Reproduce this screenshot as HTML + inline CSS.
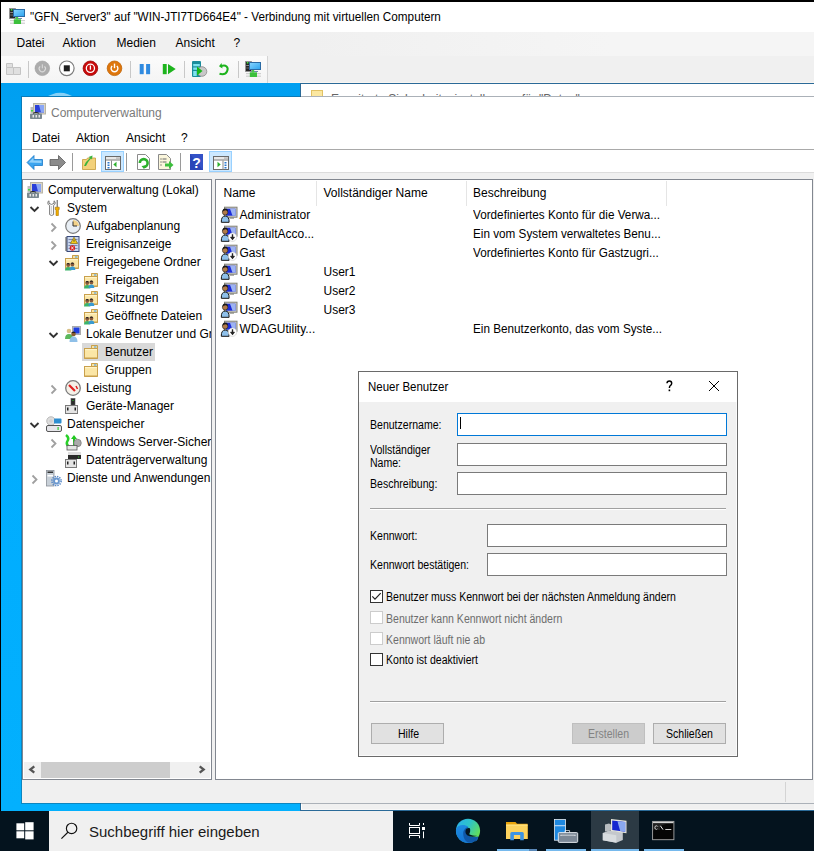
<!DOCTYPE html>
<html><head><meta charset="utf-8">
<style>
*{margin:0;padding:0;box-sizing:border-box}
html,body{width:814px;height:851px;overflow:hidden;background:#000}
body{position:relative;font-family:"Liberation Sans",sans-serif;font-size:12px;color:#000}
.a{position:absolute}
.t{position:absolute;white-space:nowrap;line-height:14px}
svg{position:absolute;overflow:visible}
</style></head><body>
<div class="a" style="left:1px;top:2px;width:813px;height:30px;background:#fff"></div>
<div class="t" style="left:29.6px;top:9.84px;font-size:12px;color:#000;transform:scaleX(0.977);transform-origin:0 0;">"GFN_Server3" auf "WIN-JTI7TD664E4" - Verbindung mit virtuellen Computern</div>
<div class="a" style="left:1px;top:32px;width:813px;height:24px;background:linear-gradient(90deg,#f0f0f0 0%,#f0f0f0 38%,#f5f5f5 75%)"></div>
<div class="t" style="left:16.5px;top:36.34px;font-size:12px;color:#000;">Datei</div>
<div class="t" style="left:62.5px;top:36.34px;font-size:12px;color:#000;">Aktion</div>
<div class="t" style="left:116.5px;top:36.34px;font-size:12px;color:#000;">Medien</div>
<div class="t" style="left:175.5px;top:36.34px;font-size:12px;color:#000;">Ansicht</div>
<div class="t" style="left:233.5px;top:36.34px;font-size:12px;color:#000;">?</div>
<div class="a" style="left:1px;top:56px;width:813px;height:27px;background:#f0f0f0;border-bottom:1px solid #f9f6f2"></div>
<div class="a" style="left:1px;top:56px;width:267px;height:27px;background:linear-gradient(#fbfbfb,#f4f4f4);border-right:1px solid #d4d4d4"></div>
<svg style="left:0;top:0" width="814" height="90">
<!-- disabled ctrl-alt-del -->
<g fill="#e0e0e0" stroke="#c4c4c4" stroke-width="1">
<path d="M6.5 63.5 h6 v4 h-6z"/><path d="M6.5 67.5 h7 v7 h-7z"/><path d="M13.5 67.5 h7 v7 h-7z"/>
</g>
<rect x="28" y="61" width="1" height="17" fill="#c8c8c8"/>
<circle cx="42.3" cy="68.3" r="7.3" fill="#acacac" stroke="#a0a0a0" stroke-width=".6"/>
<path d="M40.1 66.4 a3.1 3.1 0 1 0 4.4 0" fill="none" stroke="#dcdcdc" stroke-width="1.1"/><rect x="41.8" y="64.3" width="1" height="4" fill="#dcdcdc"/>
<circle cx="66.8" cy="68.3" r="7.3" fill="#fff" stroke="#7c7c7c" stroke-width="1.2"/>
<rect x="63.8" y="65.3" width="6" height="6" fill="#1e1e1e"/>
<circle cx="90.4" cy="68.3" r="7.3" fill="#c80a0a" stroke="#9a0404" stroke-width=".8"/>
<circle cx="90.4" cy="68.3" r="4.1" fill="none" stroke="#fff" stroke-width="1.3"/><rect x="89.75" y="65.5" width="1.3" height="4.2" fill="#fff"/>
<circle cx="114.5" cy="68.3" r="7.3" fill="#de760c" stroke="#c06408" stroke-width=".8"/>
<path d="M112.2 65.9 a3.4 3.4 0 1 0 4.6 0" fill="none" stroke="#fff" stroke-width="1.4"/><rect x="113.8" y="63.6" width="1.4" height="4.6" fill="#fff"/>
<rect x="130" y="61" width="1" height="17" fill="#c8c8c8"/>
<rect x="139.7" y="64" width="4" height="10.2" fill="#2f8ae0"/><rect x="146.1" y="64" width="4" height="10.2" fill="#2f8ae0"/>
<rect x="162.8" y="64" width="3.9" height="10.2" fill="#1db41d"/><path d="M168 64 L175.7 69.1 L168 74.2z" fill="#1db41d"/>
<rect x="184" y="61" width="1" height="17" fill="#c8c8c8"/>
<rect x="192" y="61" width="9" height="16" rx="1" fill="#1a8c9c"/>
<rect x="193.2" y="64" width="6.6" height="2.3" fill="#7fe3ef"/><rect x="193.2" y="67.5" width="6.6" height="2.3" fill="#7fe3ef"/><rect x="193.2" y="71" width="3.5" height="5" fill="#7fe3ef"/>
<circle cx="202" cy="71.5" r="4.8" fill="#c8c8c8" stroke="#8a8a8a" stroke-width=".8"/>
<path d="M197 66.5 L202.5 71 L197 75.5z" fill="#18b818"/>
<path d="M221.5 63 L219 66.3 L222.5 68.5z" fill="#1db41d"/>
<path d="M220.5 66.5 C226 64 229 67.5 227 71.5 C225.5 74.5 222 74.5 219.5 73.8" fill="none" stroke="#1db41d" stroke-width="2"/>
<rect x="238" y="61" width="1" height="17" fill="#c8c8c8"/>
<defs>
<linearGradient id="vmg" x1="0" y1="0" x2="1" y2="1"><stop offset="0" stop-color="#8ad6ff"/><stop offset="1" stop-color="#2aa2ee"/></linearGradient>
<symbol id="vmc" viewBox="0 0 16 16" overflow="visible">
<rect x="0.4" y="0.4" width="6" height="10.2" fill="#262626" stroke="#9a9a9a" stroke-width=".8"/>
<rect x="1.8" y="1" width="1.6" height="1.6" fill="#3ee03e"/>
<rect x="1.2" y="4" width="3" height="1" fill="#8a8a8a"/><rect x="1.2" y="6.5" width="3" height="1" fill="#6a6a6a"/>
<rect x="4.5" y="1.5" width="11" height="7" fill="url(#vmg)" stroke="#2a6aa4" stroke-width="1"/>
<rect x="1" y="12" width="15" height="1.2" fill="#cfcfcf"/><rect x="1" y="14.6" width="15" height="1.2" fill="#cfcfcf"/>
<rect x="6.5" y="10.1" width="6.5" height=".8" fill="#4a6a9a"/>
<rect x="6.8" y="9" width="2.4" height="2.5" fill="#4cc84c"/>
<rect x="4.8" y="11.3" width="7.2" height="4.7" fill="#3cc03c"/>
</symbol></defs>
<use href="#vmc" x="245" y="61" width="16" height="16"/>
</svg>
<svg style="left:9px;top:8px" width="16" height="16"><use href="#vmc" width="16" height="16"/></svg>
<div class="a" style="left:1px;top:83px;width:813px;height:728px;background:linear-gradient(#009ff0 0%,#00a6f8 20%,#00adff 50%,#03b0fd 100%)"></div>
<div class="a" style="left:300px;top:83px;width:514px;height:728px;background:#f0f0f0;border:1px solid #2a6a98;border-right:none"></div>
<div class="a" style="left:301px;top:84px;width:513px;height:12px;background:#fff"></div>
<div class="a" style="left:301px;top:84px;width:1px;height:726px;background:#fff"></div>
<div class="a" style="left:301px;top:809px;width:513px;height:1px;background:#f7f7f7"></div>
<div class="a" style="left:311px;top:90px;width:12px;height:6px;background:#fbe7a0;border:1px solid #e2c264;border-bottom:none"></div>
<svg style="left:0;top:0" width="814" height="100"><path d="M48 96 Q53 94 56 93 Q60 92.3 64 93 Q68 94 72 96z" fill="#a8dcf8" opacity=".8"/></svg>
<div class="a" style="left:331px;top:84px;width:300px;height:12px;overflow:hidden"><div class="t" style="left:0;top:7.8px;font-size:12px;color:#666">Erweiterte Sicherheitseinstellungen für "Daten"</div></div>
<div class="a" style="left:21px;top:96px;width:793px;height:708px;border:1px solid rgba(30,50,70,.33);border-right:none"></div>
<div class="a" style="left:22px;top:97px;width:792px;height:706px;background:#f0f0f0"></div>
<div class="a" style="left:22px;top:97px;width:792px;height:53px;background:#fff;border-bottom:1px solid #a9a9a9"></div>
<div class="t" style="left:51px;top:105.84px;font-size:12px;color:#7a7a7a;">Computerverwaltung</div>
<div class="t" style="left:32px;top:130.84px;font-size:12px;color:#000;">Datei</div>
<div class="t" style="left:76px;top:130.84px;font-size:12px;color:#000;">Aktion</div>
<div class="t" style="left:126px;top:130.84px;font-size:12px;color:#000;">Ansicht</div>
<div class="t" style="left:181px;top:130.84px;font-size:12px;color:#000;">?</div>
<div class="a" style="left:22px;top:150px;width:792px;height:22px;background:#fff"></div>
<div class="a" style="left:22px;top:172px;width:792px;height:1px;background:#dcdcdc"></div>
<div class="a" style="left:101px;top:151px;width:23px;height:21px;background:#cce8ff;border:1px solid #99d1ff"></div>
<div class="a" style="left:209px;top:151px;width:23px;height:21px;background:#cce8ff;border:1px solid #99d1ff"></div>
<div class="a" style="left:22px;top:179px;width:190px;height:601px;background:#fff;border:1px solid #828790"></div>
<div class="a" style="left:215px;top:179px;width:598px;height:601px;background:#fff;border:1px solid #828790"></div>
<div class="a" style="left:785px;top:782px;width:1px;height:20px;background:#d4d4d4"></div>
<svg width="0" height="0" style="position:absolute"><defs>
<symbol id="cm" viewBox="0 0 16 16" overflow="visible">
 <rect x="3.5" y="0.5" width="12" height="10.5" fill="#d9d5c6" stroke="#b8b4a6" stroke-width="1"/>
 <rect x="5" y="2" width="9" height="7.5" fill="#2a3fd8"/>
 <path d="M9 2 h5 v7.5 h-3z" fill="#8aa6f5"/>
 <rect x="0.5" y="4" width="2.5" height="6" fill="#bdbdbd"/>
 <rect x="1" y="7" width="2" height="1.5" fill="#3fdc3f"/>
 <path d="M3 10.5 q3 -2 6 0" fill="none" stroke="#222" stroke-width="1.2"/>
 <rect x="0" y="10.5" width="12" height="5.5" rx=".8" fill="#7b8990"/>
 <rect x="2.5" y="12" width="1.5" height="2.5" fill="#e6e6e6"/><rect x="5.5" y="12" width="1.5" height="2.5" fill="#e6e6e6"/><rect x="8.5" y="12" width="1.5" height="2.5" fill="#e6e6e6"/>
</symbol>
<symbol id="user" viewBox="0 0 16 16" overflow="visible">
 <rect x="3.5" y="0.5" width="12.5" height="10" fill="#d0d0c8" stroke="#808078" stroke-width="1"/>
 <rect x="5" y="2" width="9.5" height="7" fill="#1c2cd8"/>
 <path d="M9 2 h5.5 v7 h-3z" fill="#9db3f2"/>
 <rect x="8.5" y="10.5" width="4.5" height="1.5" fill="#909088"/>
 <path d="M0.3 15.6 q-.2 -6.3 3.9 -6.3 q4.1 0 3.9 6.3z" fill="#8ec0ea" stroke="#151515" stroke-width="1"/>
 <circle cx="4.1" cy="5.6" r="2.7" fill="#b07a48" stroke="#222" stroke-width=".6"/>
 <path d="M1.3 5.2 q.3 -3.6 3 -3.4 q2.6 .1 2.7 3 q-1.2 -1.4 -2.8 -1.2 q-1.8 .2 -2.9 1.6z" fill="#1a1a1a"/>
</symbol>
<symbol id="userd" viewBox="0 0 16 16" overflow="visible">
 <use href="#user" width="16" height="16"/>
 <circle cx="11.5" cy="11.5" r="4.2" fill="#fff" stroke="#c8c8c8" stroke-width=".6"/>
 <path d="M11.5 8.6 v4.5 M9.6 11.2 l1.9 2.2 l1.9 -2.2" fill="none" stroke="#222" stroke-width="1.4"/>
</symbol>
<symbol id="fold" viewBox="0 0 16 16" overflow="visible">
 <path d="M0.5 3.5 h6 l1 -1 h0 v-2 h5.5 q.5 0 .5 .5 v12.5 h-13z" fill="#f3d27e" stroke="#c9a04c" stroke-width="1"/>
 <rect x="7.5" y="0.5" width="6" height="3" rx=".5" fill="#fbe3a0" stroke="#c9a04c" stroke-width="1"/>
 <rect x="10" y="1.5" width="2.5" height="1" fill="#3a9af0"/>
 <rect x="0.5" y="3.5" width="13" height="9.5" fill="#fbe6a6" stroke="#c9a04c" stroke-width="1"/>
 <rect x="1" y="4" width="12" height="1.2" fill="#fff3c8"/>
</symbol>
<symbol id="sfold" viewBox="0 0 16 16" overflow="visible">
 <use href="#fold" width="16" height="16"/>
 <circle cx="3.2" cy="10" r="1.9" fill="#8a5a3a"/><path d="M1.3 9.2 q1.9 -2.4 3.8 0z" fill="#222"/>
 <path d="M0 15.5 q0 -3.6 3.2 -3.6 q3.2 0 3.2 3.6z" fill="#3cb46a"/>
 <circle cx="7.4" cy="9.5" r="1.9" fill="#8a5a3a"/><path d="M5.5 8.7 q1.9 -2.4 3.8 0z" fill="#222"/>
 <path d="M4.5 15 q0 -3.4 2.9 -3.4 q2.9 0 2.9 3.4z" fill="#3a9ad0"/>
</symbol>
<symbol id="chevd" viewBox="0 0 10 6" overflow="visible"><path d="M1 1 L5 5 L9 1" fill="none" stroke="#333" stroke-width="1.9"/></symbol>
<symbol id="chevr" viewBox="0 0 6 10" overflow="visible"><path d="M1 1 L5 5 L1 9" fill="none" stroke="#a0a0a0" stroke-width="1.8"/></symbol>
</defs></svg>
<svg style="left:30px;top:103px" width="16" height="16"><use href="#cm" width="16" height="16"/></svg>
<svg style="left:0;top:0" width="814" height="180">
<path d="M27 162.5 L34 155.5 V159.5 H42.5 V165.5 H34 V169.5z" fill="#3aa4ef" stroke="#1a78c8" stroke-width=".8"/>
<path d="M28.5 162.5 L33.5 157.5 V160.5 H41.5 V163z" fill="#8fd0fa"/>
<path d="M65.5 162.5 L58.5 155.5 V159.5 H50 V165.5 H58.5 V169.5z" fill="#8c8c8c" stroke="#5c5c5c" stroke-width=".8"/>
<rect x="72" y="153" width="1" height="18" fill="#9a9a9a"/>
<path d="M82.5 159.5 h4 l1 -1.5 h8 v11.5 h-13z" fill="#f3d17a" stroke="#c59a3a" stroke-width=".8"/>
<path d="M84 166 q2 -5 6 -8 l-1.5 -1 l4 -1.5 l-0.5 4 l-1 -1 q-3 3 -5 7.5z" fill="#3cb43c"/>
<rect x="105.5" y="156.5" width="15" height="13" fill="#fff" stroke="#6a6a6a" stroke-width="1"/>
<rect x="106" y="157" width="14" height="2.5" fill="#e8e8e8"/><rect x="106" y="159.5" width="14" height="1" fill="#7a7a7a"/>
<rect x="116.5" y="157.6" width="1" height="1" fill="#666"/><rect x="118.5" y="157.6" width="1" height="1" fill="#666"/>
<rect x="107.5" y="162" width="2" height="1.5" fill="#2a78d0"/><rect x="107.5" y="164.5" width="2" height="1.5" fill="#2a78d0"/><rect x="107.5" y="167" width="2" height="1.5" fill="#2a78d0"/>
<path d="M116.5 161.8 v5.5 l-3.2 -2.75z" fill="#2cb02c"/>
<rect x="111" y="160.5" width="1" height="9" fill="#8a8a8a"/>
<rect x="126" y="153" width="1" height="18" fill="#9a9a9a"/>
<path d="M137.5 154.5 h8 l4 4 v11 h-12z" fill="#fff" stroke="#8a8a8a" stroke-width="1"/>
<path d="M139.8 163 a3.9 3.9 0 1 1 3.9 3.9" fill="none" stroke="#2cb02c" stroke-width="2.6"/>
<path d="M141.5 166 l4.5 -0.5 l-2 3.5z" fill="#2cb02c"/>
<path d="M158.5 154.5 h8 l4 4 v11 h-12z" fill="#fbf6dc" stroke="#8a8a8a" stroke-width="1"/>
<rect x="160.5" y="158.5" width="1" height="1" fill="#333"/><rect x="162.5" y="158.5" width="4" height="1" fill="#666"/>
<rect x="160.5" y="161.5" width="1" height="1" fill="#333"/><rect x="162.5" y="161.5" width="4" height="1" fill="#666"/>
<rect x="160.5" y="164.5" width="1" height="1" fill="#333"/>
<path d="M165 163.5 h4 v-2.5 l4.5 4 l-4.5 4 v-2.5 h-4z" fill="#3cbf3c"/>
<rect x="180" y="153" width="1" height="18" fill="#9a9a9a"/>
<rect x="190" y="154" width="13" height="16" fill="#2a46b8"/>
<path d="M190 154 h13 v16 z" fill="#3a5ad0" opacity=".6"/>
<text x="196.5" y="167.5" font-family="Liberation Sans" font-size="14" font-weight="bold" fill="#fff" text-anchor="middle">?</text>
<rect x="213.5" y="156.5" width="15" height="13" fill="#fff" stroke="#6a6a6a" stroke-width="1"/>
<rect x="214" y="157" width="14" height="2.5" fill="#e8e8e8"/><rect x="214" y="159.5" width="14" height="1" fill="#7a7a7a"/>
<rect x="224.5" y="157.6" width="1" height="1" fill="#666"/><rect x="226.5" y="157.6" width="1" height="1" fill="#666"/>
<path d="M217.5 161.8 v5.5 l3.2 -2.75z" fill="#2cb02c"/>
<rect x="222.5" y="160.5" width="1" height="9" fill="#8a8a8a"/>
<rect x="224.5" y="162" width="2" height="1.5" fill="#2a78d0"/><rect x="224.5" y="164.5" width="2" height="1.5" fill="#2a78d0"/><rect x="224.5" y="167" width="2" height="1.5" fill="#2a78d0"/>
</svg>
<div class="a" style="left:0;top:0;width:211px;height:779px;overflow:hidden">
<div class="a" style="left:82px;top:343px;width:73px;height:18px;background:#d9d9d9"></div>
<div class="t" style="left:48px;top:182.84px;font-size:12px;color:#000;">Computerverwaltung (Lokal)</div>
<div class="t" style="left:67px;top:200.84px;font-size:12px;color:#000;">System</div>
<div class="t" style="left:86px;top:218.84px;font-size:12px;color:#000;">Aufgabenplanung</div>
<div class="t" style="left:86px;top:236.84px;font-size:12px;color:#000;">Ereignisanzeige</div>
<div class="t" style="left:86px;top:254.84px;font-size:12px;color:#000;">Freigegebene Ordner</div>
<div class="t" style="left:105px;top:272.84px;font-size:12px;color:#000;">Freigaben</div>
<div class="t" style="left:105px;top:290.84px;font-size:12px;color:#000;">Sitzungen</div>
<div class="t" style="left:105px;top:308.84px;font-size:12px;color:#000;">Geöffnete Dateien</div>
<div class="t" style="left:86px;top:326.84px;font-size:12px;color:#000;">Lokale Benutzer und Gruppen</div>
<div class="t" style="left:105px;top:344.84px;font-size:12px;color:#000;">Benutzer</div>
<div class="t" style="left:105px;top:362.84px;font-size:12px;color:#000;">Gruppen</div>
<div class="t" style="left:86px;top:380.84px;font-size:12px;color:#000;">Leistung</div>
<div class="t" style="left:86px;top:398.84px;font-size:12px;color:#000;">Geräte-Manager</div>
<div class="t" style="left:67px;top:416.84px;font-size:12px;color:#000;">Datenspeicher</div>
<div class="t" style="left:86px;top:434.84px;font-size:12px;color:#000;">Windows Server-Sicherung</div>
<div class="t" style="left:86px;top:452.84px;font-size:12px;color:#000;">Datenträgerverwaltung</div>
<div class="t" style="left:67px;top:470.84px;font-size:12px;color:#000;">Dienste und Anwendungen</div>
<svg style="left:0;top:0" width="814" height="500"><g transform="translate(27,182)"><use href="#cm" width="16" height="16"/></g>
<use href="#chevd" x="29.5" y="206" width="10" height="6"/>
<g transform="translate(46,200)"><path d="M3 0.8 C1.2 1.6 1.4 4.6 3.6 5.4 V14.6 Q5.6 16.4 7.6 14.6 V5.4 C9.6 4.6 9.8 1.6 8 0.8 V3.4 L5.5 4.4 L3 3.4z" fill="#fafafa" stroke="#6e6e6e" stroke-width=".9"/><rect x="5.2" y="6" width=".8" height="8" fill="#c8c8c8"/><rect x="10.6" y="0" width="1.3" height="7.5" fill="#7a7a7a"/><path d="M9.2 7.2 h4 v2.3 h-0.8 v6 h-2.4 v-6 h-0.8z" fill="#f2b000" stroke="#a87000" stroke-width=".6"/></g>
<use href="#chevr" x="50.5" y="222.5" width="6" height="10"/>
<g transform="translate(65,218)"><circle cx="8" cy="8" r="7.3" fill="#e8eef4" stroke="#7a7a7a" stroke-width="1.2"/><path d="M8 8 V2 A6 6 0 0 1 14 8z" fill="#f2d28a"/><path d="M8 3.5 V8 H12" fill="none" stroke="#333" stroke-width="1"/></g>
<use href="#chevr" x="50.5" y="240.5" width="6" height="10"/>
<g transform="translate(65,236)"><rect x="2" y="0.5" width="12" height="15" fill="#c8d6ee" stroke="#3a4a7a" stroke-width="1"/><rect x="3.5" y="3" width="9" height="1" fill="#7a8ab0"/><rect x="3.5" y="6" width="9" height="1" fill="#7a8ab0"/><rect x="3.5" y="9" width="9" height="1" fill="#7a8ab0"/><rect x="3.5" y="12" width="9" height="1" fill="#7a8ab0"/><path d="M1 1.5 v13" stroke="#333" stroke-width="1.8" stroke-dasharray="1 1"/><path d="M9 1.2 l3.6 6.3 h-7.2z" fill="#f3cc1a" stroke="#7a5a00" stroke-width=".6"/><rect x="8.6" y="3.5" width=".8" height="2.2" fill="#333"/><circle cx="7.4" cy="12" r="2.7" fill="#d82020"/><path d="M6.2 10.8 l2.4 2.4 M8.6 10.8 l-2.4 2.4" stroke="#fff" stroke-width=".9"/></g>
<use href="#chevd" x="48.5" y="260" width="10" height="6"/>
<g transform="translate(65,254)"><use href="#sfold" x="0" y="1" width="16" height="16"/></g>
<g transform="translate(84,272)"><use href="#sfold" x="0" y="1" width="16" height="16"/></g>
<g transform="translate(84,290)"><use href="#sfold" x="0" y="1" width="16" height="16"/></g>
<g transform="translate(84,308)"><use href="#sfold" x="0" y="1" width="16" height="16"/></g>
<use href="#chevd" x="48.5" y="332" width="10" height="6"/>
<g transform="translate(65,326)"><rect x="7.5" y="0.5" width="8" height="8" fill="#d8d8d0" stroke="#aaa" stroke-width="1"/><rect x="8.5" y="1.5" width="6" height="6" fill="#1f3fe0"/><circle cx="4" cy="5" r="2.3" fill="#d8c088"/><path d="M0 13 q0 -5 4 -5 q4 0 4 5z" fill="#5cb85c"/><circle cx="8.5" cy="8" r="2.3" fill="#8a5a30"/><path d="M6.2 7 q2.3 -3 4.6 0z" fill="#222"/><path d="M4.5 16 q0 -5.5 4 -5.5 q4 0 4 5.5z" fill="#8fc0e8"/></g>
<g transform="translate(84,344)"><use href="#fold" x="0" y="1" width="16" height="16"/></g>
<g transform="translate(84,362)"><use href="#fold" x="0" y="1" width="16" height="16"/></g>
<use href="#chevr" x="50.5" y="384.5" width="6" height="10"/>
<g transform="translate(65,380)"><circle cx="8" cy="8" r="7.3" fill="#f4f0e8" stroke="#7a7a7a" stroke-width="1.3"/><path d="M4 5 l6 6" stroke="#e02020" stroke-width="2.2"/><path d="M11 6 l1.5 3" stroke="#e02020" stroke-width="1.5"/></g>
<g transform="translate(65,398)"><rect x="6" y="0.5" width="4" height="6.5" fill="#2a2a2a" stroke="#555" stroke-width=".6"/><rect x="7.5" y="2" width="1" height="1" fill="#3c3"/><rect x="0.5" y="7.5" width="12" height="8" fill="#e4e4e4" stroke="#7a7a7a" stroke-width="1"/><rect x="2" y="9.5" width="1.5" height="3" fill="#222"/><rect x="9.5" y="9.5" width="1.5" height="3" fill="#222"/></g>
<use href="#chevd" x="29.5" y="422" width="10" height="6"/>
<g transform="translate(46,416)"><circle cx="5" cy="5" r="4.3" fill="#ddd" stroke="#999" stroke-width=".6"/><circle cx="5" cy="5" r="1" fill="#fff" stroke="#888" stroke-width=".4"/><rect x="8" y="2.5" width="7.5" height="5" rx="1" fill="#2d8ed0"/><rect x="0.5" y="9.5" width="15" height="6" rx="1.5" fill="#e6e6ea" stroke="#555" stroke-width="1"/><rect x="11.5" y="11" width="1.2" height="3" fill="#3c3"/></g>
<use href="#chevr" x="50.5" y="438.5" width="6" height="10"/>
<g transform="translate(65,434)"><path d="M1 1 q4 3 1 7 q-1 2 2 5" fill="none" stroke="#28d028" stroke-width="2.5"/><path d="M9 1 l-3 4 h2 v8 h2 v-8 h2z" fill="#20c820"/><circle cx="12.5" cy="9" r="3.8" fill="#aaa" stroke="#666" stroke-width=".6"/><rect x="2" y="11.5" width="10" height="4.5" fill="#e4e4e4" stroke="#555" stroke-width=".8"/></g>
<g transform="translate(65,452)"><rect x="3" y="0" width="13" height="3" fill="#e0e0e0"/><rect x="3" y="3" width="13" height="4" fill="#2a2a2a"/><rect x="13" y="4.5" width="1.2" height="1" fill="#3c3"/><rect x="0.5" y="7.5" width="11" height="8" fill="#e4e4e4" stroke="#7a7a7a" stroke-width="1"/><rect x="2" y="9.5" width="1.5" height="3" fill="#222"/><rect x="8.5" y="9.5" width="1.5" height="3" fill="#222"/></g>
<use href="#chevr" x="31.5" y="474.5" width="6" height="10"/>
<g transform="translate(46,470)"><rect x="0.5" y="0.5" width="7.5" height="15.5" fill="#c8d0d8" stroke="#8a9098" stroke-width=".8"/><rect x="1.5" y="1.5" width="5.5" height="1.5" fill="#333"/><rect x="1.5" y="5" width="5.5" height="1.5" fill="#fff"/><circle cx="10.5" cy="11" r="4.6" fill="none" stroke="#5a8ac8" stroke-width="1.6" stroke-dasharray="1.4 1"/><circle cx="10.5" cy="11" r="3.4" fill="#6a98d0"/><circle cx="10.5" cy="11" r="1.5" fill="#fff"/></g></svg>
</div>
<div class="a" style="left:24px;top:762px;width:186px;height:16px;background:#f0f0f0"></div>
<div class="a" style="left:41px;top:762px;width:129px;height:16px;background:#cdcdcd"></div>
<svg style="left:0;top:0" width="814" height="851"><path d="M34.3 766.3 L30.3 769.5 L34.3 772.7" fill="none" stroke="#555" stroke-width="2.3"/><path d="M199.7 766.3 L203.7 769.5 L199.7 772.7" fill="none" stroke="#555" stroke-width="2.3"/></svg>
<div class="t" style="left:223.5px;top:185.84px;font-size:12px;color:#000;">Name</div>
<div class="t" style="left:323.5px;top:185.84px;font-size:12px;color:#000;">Vollständiger Name</div>
<div class="t" style="left:473px;top:185.84px;font-size:12px;color:#000;">Beschreibung</div>
<div class="a" style="left:316px;top:181px;width:1px;height:25px;background:#e5e5e5"></div>
<div class="a" style="left:466px;top:181px;width:1px;height:25px;background:#e5e5e5"></div>
<div class="a" style="left:666px;top:181px;width:1px;height:25px;background:#e5e5e5"></div>
<div class="t" style="left:239.5px;top:208.14px;font-size:12px;color:#000;">Administrator</div>
<div class="t" style="left:473px;top:208.14px;font-size:12px;color:#000;transform:scaleX(0.977);transform-origin:0 0;">Vordefiniertes Konto für die Verwa...</div>
<div class="t" style="left:239.5px;top:227.14px;font-size:12px;color:#000;">DefaultAcco...</div>
<div class="t" style="left:473px;top:227.14px;font-size:12px;color:#000;transform:scaleX(0.977);transform-origin:0 0;">Ein vom System verwaltetes Benu...</div>
<div class="t" style="left:239.5px;top:246.14px;font-size:12px;color:#000;">Gast</div>
<div class="t" style="left:473px;top:246.14px;font-size:12px;color:#000;transform:scaleX(0.977);transform-origin:0 0;">Vordefiniertes Konto für Gastzugri...</div>
<div class="t" style="left:239.5px;top:265.14px;font-size:12px;color:#000;">User1</div>
<div class="t" style="left:323.5px;top:265.14px;font-size:12px;color:#000;">User1</div>
<div class="t" style="left:239.5px;top:284.14px;font-size:12px;color:#000;">User2</div>
<div class="t" style="left:323.5px;top:284.14px;font-size:12px;color:#000;">User2</div>
<div class="t" style="left:239.5px;top:303.14px;font-size:12px;color:#000;">User3</div>
<div class="t" style="left:323.5px;top:303.14px;font-size:12px;color:#000;">User3</div>
<div class="t" style="left:239.5px;top:322.14px;font-size:12px;color:#000;">WDAGUtility...</div>
<div class="t" style="left:473px;top:322.14px;font-size:12px;color:#000;transform:scaleX(0.977);transform-origin:0 0;">Ein Benutzerkonto, das vom Syste...</div>
<svg style="left:0;top:0" width="814" height="400"><use href="#user" x="221" y="206.70000000000002" width="16" height="16"/><use href="#userd" x="221" y="225.70000000000002" width="16" height="16"/><use href="#userd" x="221" y="244.70000000000002" width="16" height="16"/><use href="#user" x="221" y="263.7" width="16" height="16"/><use href="#user" x="221" y="282.7" width="16" height="16"/><use href="#user" x="221" y="301.7" width="16" height="16"/><use href="#userd" x="221" y="320.7" width="16" height="16"/></svg>
<div class="a" style="left:0;top:811px;width:814px;height:40px;background:#04131e"></div>
<div class="a" style="left:49px;top:811px;width:344px;height:40px;background:#f0f0f0"></div>
<div class="t" style="left:89px;top:824.80px;font-size:15px;color:#1a1a1a;">Suchbegriff hier eingeben</div>
<div class="a" style="left:591px;top:811px;width:48px;height:40px;background:#2c3a44"></div>
<svg style="left:0;top:0" width="814" height="851">
<!-- start logo -->
<g fill="#fff">
<rect x="16.4" y="823.3" width="7.8" height="7"/><rect x="25.2" y="822.2" width="8.4" height="8.1"/>
<rect x="16.4" y="831.3" width="7.8" height="7"/><rect x="25.2" y="831.3" width="8.4" height="8.1"/>
</g>
<!-- magnifier -->
<circle cx="71.6" cy="828.4" r="5.2" fill="none" stroke="#111" stroke-width="1.15"/>
<path d="M67.9 832.2 L61.4 838.6" stroke="#111" stroke-width="1.2"/>
<!-- task view -->
<g fill="none" stroke="#fff" stroke-width="1">
<path d="M409.5 823 V825.5 H419.5 V823"/>
<rect x="409.5" y="827.5" width="10" height="6"/>
<path d="M409.5 838.2 V835.5 H419.5 V838.2"/>
<path d="M423.5 823 V825 M423.5 831.5 V838.2"/>
</g>
<rect x="422" y="827" width="3" height="3" fill="#fff"/>
<!-- edge -->
<defs>
<linearGradient id="eg1" x1="0" y1="0" x2="1" y2=".6"><stop offset="0" stop-color="#2aaef0"/><stop offset=".5" stop-color="#2ec4c8"/><stop offset="1" stop-color="#66e052"/></linearGradient>
<linearGradient id="eg2" x1="0" y1="0" x2="0" y2="1"><stop offset="0" stop-color="#1e8ce0"/><stop offset="1" stop-color="#1474d4"/></linearGradient>
</defs>
<g transform="translate(452,815)">
<circle cx="16" cy="15.8" r="12.1" fill="url(#eg1)"/>
<path d="M4 14.5 C5.5 9.5 12.5 8.8 16.5 12 C14.5 13 12.5 15.5 12.5 18.5 C12.5 23.5 17 26.5 22 26.5 C24 26.5 25.8 25.8 26.2 21.8 C23 27.5 20 28 16 28 C9.3 28 4 22.6 4 15.8z" fill="url(#eg2)"/>
<path d="M11.2 18.5 C11.2 14.5 14.5 12.2 16.5 12 C15 14 14.5 16 15 18.5 C16 21.5 20 22.5 26.2 21.6 C25 25.5 21.5 27.6 18 27.7 C13.8 27.7 11.2 23.5 11.2 18.5z" fill="#0f58a8"/>
<path d="M13.5 15.8 C14 13.5 16 12.6 17.8 13.2 C18.6 14.8 18.2 17.5 17.2 19.2 C19.5 20.4 22 20.8 25 20.8 C21 22.3 16.5 21.8 14.5 19.6 C13.7 18.6 13.3 17.2 13.5 15.8z" fill="#041520"/>
</g>
<!-- explorer -->
<path d="M506 822 h9.5 l1.5 1.8 h10.6 v15.2 h-21.6z" fill="#e9a30a"/>
<rect x="506" y="824.6" width="21.6" height="14.4" fill="#fdd35e"/>
<rect x="506" y="824.6" width="21.6" height="1" fill="#ffe48a"/>
<path d="M510.3 840.2 v-6.8 q0 -1.5 1.5 -1.5 h10.5 q1.5 0 1.5 1.5 v6.8 h-3.6 v-5.2 h-6.3 v5.2z" fill="#3c94e4"/>
<rect x="497" y="849" width="32" height="2" fill="#76b9ed"/><rect x="529" y="849" width="8" height="2" fill="#5a88b8"/>
<!-- server manager -->
<rect x="554.6" y="819.6" width="10.8" height="20.6" fill="#1e88e0" stroke="#e8f0f8" stroke-width=".8"/>
<rect x="554.6" y="825.3" width="10.8" height=".9" fill="#e8f0f8"/>
<path d="M565 832.6 v-2 h4.6 v2" fill="none" stroke="#e8f0f8" stroke-width=".8"/>
<rect x="558.3" y="832.6" width="19.4" height="9.8" rx="1" fill="#7c8896" stroke="#eef2f6" stroke-width=".9"/>
<path d="M560.5 835.2 h15 M561 835 v1 M575 835 v1" stroke="#e0e6ec" stroke-width=".8"/>
<rect x="546" y="849" width="40" height="2" fill="#76b9ed"/>
<!-- hyper-v connect -->
<path d="M605 824.5 l4 -1 l2 1 v6 l-6 1z" fill="#b8bcc0"/>
<path d="M602.8 833 l6 -2.5 l14 1.5 v8 l-6.5 2.8 l-13.5 -2.5z" fill="#c4c8cc"/>
<path d="M602.8 833 l13.5 2.2 v7.6 l-13.5 -2.5z" fill="#d8dcdf"/>
<path d="M611 819 l15.5 1.8 v12.4 l-15.5 -2.2z" fill="#e6e6dc"/>
<path d="M612.2 820.6 l13 1.4 v9.8 l-13 -1.8z" fill="#1426d0"/>
<path d="M617.5 821.2 l7.7 .8 v9.8 l-5 -.7 q-1.5 -5 -2.7 -9.9z" fill="#8aa8f0"/>
<rect x="591" y="849" width="48" height="2" fill="#76b9ed"/>
<!-- cmd -->
<rect x="652.6" y="821.4" width="21.3" height="18.3" fill="#050505" stroke="#a8a8a8" stroke-width=".9"/>
<rect x="653" y="821.8" width="20.5" height="1.4" fill="#d4d4d4"/>
<path d="M653 823.2 h16 q-6 1 -10 3.5 q-4 2 -6 4z" fill="#3a3a3a" opacity=".55"/>
<path d="M657.6 826.4 q-.6 -.6 -1.3 -.6 q-1.4 0 -1.4 1.8 q0 1.8 1.4 1.8 q.7 0 1.3 -.6" fill="none" stroke="#e0e0e0" stroke-width=".9"/>
<rect x="658.6" y="826.6" width=".8" height=".8" fill="#c0c0c0"/><rect x="658.6" y="828.6" width=".8" height=".8" fill="#c0c0c0"/>
<path d="M660.4 825.8 l2.6 3.8" stroke="#f0f0f0" stroke-width="1"/>
<rect x="665.3" y="829.1" width="6" height=".9" fill="#e8e8e8"/>
<rect x="644" y="849" width="40" height="2" fill="#76b9ed"/>
</svg>

<div class="a" style="left:358px;top:371px;width:380px;height:386px;background:#f0f0f0;border:1px solid #6a6a6a"></div>
<div class="a" style="left:359px;top:372px;width:378px;height:30px;background:#fff"></div>
<div class="a" style="left:736px;top:402px;width:1px;height:354px;background:#fafafa"></div>
<div class="a" style="left:359px;top:755px;width:378px;height:1px;background:#fafafa"></div>
<div class="t" style="left:367.6px;top:379.84px;font-size:12px;color:#000;transform:scaleX(0.955);transform-origin:0 0;">Neuer Benutzer</div>
<svg style="left:0;top:0" width="814" height="851">
<path d="M667 383.3 q0 -2.3 2.4 -2.3 q2.3 0 2.3 2.3 q0 1.5 -1.4 2.3 q-.9 .6 -.9 2.3" fill="none" stroke="#000" stroke-width="1.45"/>
<rect x="668.6" y="389.5" width="1.6" height="1.7" fill="#000"/>
<path d="M709 381 L719 391 M719 381 L709 391" stroke="#000" stroke-width="1"/>
</svg>
<div class="t" style="left:370.3px;top:417.74px;font-size:12px;color:#000;transform:scaleX(0.878);transform-origin:0 0;">Benutzername:</div>
<div class="t" style="left:370.3px;top:442.54px;font-size:12px;color:#000;transform:scaleX(0.878);transform-origin:0 0;">Vollständiger</div>
<div class="t" style="left:370.3px;top:456.24px;font-size:12px;color:#000;transform:scaleX(0.878);transform-origin:0 0;">Name:</div>
<div class="t" style="left:370.3px;top:477.24px;font-size:12px;color:#000;transform:scaleX(0.878);transform-origin:0 0;">Beschreibung:</div>
<div class="a" style="left:457px;top:413px;width:270px;height:23px;background:#fff;border:1px solid #0078d7"></div>
<div class="a" style="left:460px;top:417px;width:1px;height:12px;background:#000"></div>
<div class="a" style="left:457px;top:443px;width:270px;height:23px;background:#fff;border:1px solid #7a7a7a"></div>
<div class="a" style="left:457px;top:472px;width:270px;height:23px;background:#fff;border:1px solid #7a7a7a"></div>
<div class="a" style="left:370px;top:508px;width:356px;height:1px;background:#a0a0a0"></div>
<div class="a" style="left:370px;top:509px;width:356px;height:1px;background:#fff"></div>
<div class="t" style="left:370.3px;top:528.74px;font-size:12px;color:#000;transform:scaleX(0.878);transform-origin:0 0;">Kennwort:</div>
<div class="t" style="left:370.3px;top:557.64px;font-size:12px;color:#000;transform:scaleX(0.878);transform-origin:0 0;">Kennwort bestätigen:</div>
<div class="a" style="left:487px;top:524px;width:240px;height:23px;background:#fff;border:1px solid #7a7a7a"></div>
<div class="a" style="left:487px;top:553px;width:240px;height:23px;background:#fff;border:1px solid #7a7a7a"></div>
<div class="a" style="left:370px;top:590px;width:13px;height:13px;background:#fff;border:1px solid #333"></div>
<svg style="left:0;top:0" width="814" height="851"><path d="M372.3 596.3 L375 599.1 L380.7 593.1" fill="none" stroke="#222" stroke-width="1.2"/></svg>
<div class="t" style="left:385.8px;top:590.24px;font-size:12px;color:#000;transform:scaleX(0.878);transform-origin:0 0;">Benutzer muss Kennwort bei der nächsten Anmeldung ändern</div>
<div class="a" style="left:370px;top:611px;width:13px;height:13px;background:#fff;border:1px solid #cccccc"></div>
<div class="t" style="left:385.8px;top:611.74px;font-size:12px;color:#6d6d6d;transform:scaleX(0.878);transform-origin:0 0;">Benutzer kann Kennwort nicht ändern</div>
<div class="a" style="left:370px;top:632px;width:13px;height:13px;background:#fff;border:1px solid #cccccc"></div>
<div class="t" style="left:385.8px;top:632.74px;font-size:12px;color:#6d6d6d;transform:scaleX(0.878);transform-origin:0 0;">Kennwort läuft nie ab</div>
<div class="a" style="left:370px;top:653px;width:13px;height:13px;background:#fff;border:1px solid #333"></div>
<div class="t" style="left:385.8px;top:653.24px;font-size:12px;color:#000;transform:scaleX(0.878);transform-origin:0 0;">Konto ist deaktiviert</div>
<div class="a" style="left:370px;top:701px;width:356px;height:1px;background:#a0a0a0"></div>
<div class="a" style="left:370px;top:702px;width:356px;height:1px;background:#fff"></div>
<div class="a" style="left:371px;top:723px;width:73px;height:21px;background:#e1e1e1;border:1px solid #adadad"></div>
<div class="t" style="left:397.5px;top:726.54px;font-size:12px;color:#000;transform:scaleX(0.878);transform-origin:0 0;">Hilfe</div>
<div class="a" style="left:572px;top:723px;width:73px;height:21px;background:#cccccc;border:1px solid #bfbfbf"></div>
<div class="t" style="left:588.3px;top:726.54px;font-size:12px;color:#838383;transform:scaleX(0.878);transform-origin:0 0;">Erstellen</div>
<div class="a" style="left:653px;top:723px;width:73px;height:21px;background:#e1e1e1;border:1px solid #adadad"></div>
<div class="t" style="left:666.2px;top:726.54px;font-size:12px;color:#000;transform:scaleX(0.878);transform-origin:0 0;">Schließen</div>
</body></html>
